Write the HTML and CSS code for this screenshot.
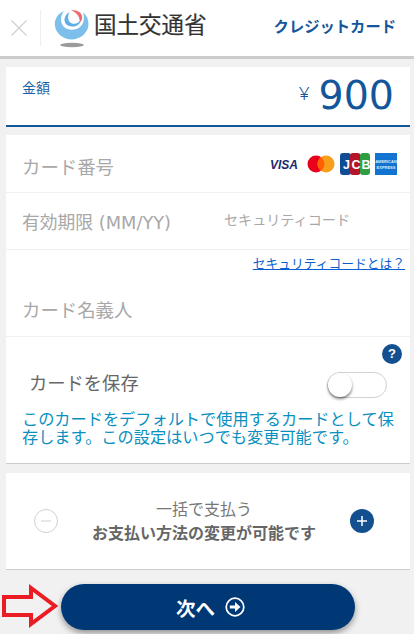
FILE: index.html
```html
<!DOCTYPE html>
<html lang="ja">
<head>
<meta charset="utf-8">
<title>クレジットカード</title>
<link rel="stylesheet" href="styles.css">
</head>
<body>
<header class="top">
  <div class="close">
    <svg width="16" height="16" viewBox="0 0 16 16"><path d="M0.5 0.5L15.5 15.5M15.5 0.5L0.5 15.5" stroke="#cfcfcf" stroke-width="1.2" fill="none"/></svg>
  </div>
  <div class="brand">
    <svg class="mark" width="36" height="38" viewBox="0 0 36 38">
      <path d="M10 1C3 4 0 10 1 16C2 24 10 29.500 17.500 29.500C26 29.500 34.500 23 34.500 14C34.500 9 32.500 5 29 2.500C31 9 29.500 14 26 17C22 20.500 14 20.500 10 17C6 13 6 6 10 1Z" fill="#7cbfea"/>
      <path d="M15.500 2C10.500 5 9.500 10 11.500 13.500C14 17.500 22 17.500 25 14C26.500 12 27 11 27 9.500C25 13 21 14.500 18 13.500C14 12 13 7 15.500 2Z" fill="#5fb0e4"/>
      <path d="M17 0.500C23 -1 29.500 3 28 9C27.500 11 26.500 12 25.500 12.500C26.500 8 23.500 2.500 17 0.500Z" fill="#ec6a72"/>
      <ellipse cx="18" cy="35" rx="12" ry="2.200" fill="#9a9a9a"/>
    </svg>
    <span class="ministry">国土交通省</span>
  </div>
  <div class="title">クレジットカード</div>
</header>

<main class="page">
  <section class="amount">
    <div class="amount-label">金額</div>
    <div class="amount-value"><span class="yen">¥</span><span class="num">900</span></div>
  </section>

  <section class="form">
    <div class="row row-number">
      <span class="ph">カード番号</span>
      <div class="brands">
        <svg class="b-visa" width="30" height="12" viewBox="0 0 30 12"><text x="0" y="11" class="visa">VISA</text></svg>
        <svg class="b-mc" width="28" height="18" viewBox="0 0 28 18"><circle cx="9" cy="9" r="8.500" fill="#eb001b"/><circle cx="19" cy="9" r="8.500" fill="#f79e1b"/><path d="M14 2.200a8.500 8.500 0 0 1 0 13.600a8.500 8.500 0 0 1 0-13.600Z" fill="#ff5f00"/></svg>
        <svg width="30" height="22" viewBox="0 0 30 22">
          <rect x="0" width="11" height="22" rx="3" fill="#0e4c96"/><rect x="10" width="10.500" height="22" rx="3" fill="#b5152b"/><rect x="20" width="10" height="22" rx="3" fill="#2f9e3f"/>
          <text x="3" y="16" class="jcb">J</text><text x="11.500" y="16" class="jcb">C</text><text x="21.500" y="16" class="jcb">B</text>
        </svg>
        <svg width="22" height="22" viewBox="0 0 22 22"><rect width="22" height="22" fill="#1273d0"/><text x="11" y="10" class="amex">AMERICAN</text><text x="11" y="15.500" class="amex">EXPRESS</text></svg>
      </div>
    </div>
    <div class="row row-exp">
      <span class="ph exp">有効期限 (MM/YY)</span>
      <span class="ph cvc">セキュリティコード</span>
    </div>
    <div class="row-link"><a class="cvc-link" href="#">セキュリティコードとは？</a></div>
    <div class="row row-name">
      <span class="ph">カード名義人</span>
    </div>
    <div class="save">
      <div class="help-row"><span class="help">?</span></div>
      <div class="save-row">
        <span class="save-label">カードを保存</span>
        <span class="toggle"><span class="knob"></span></span>
      </div>
      <p class="note">このカードをデフォルトで使用するカードとして保存します。この設定はいつでも変更可能です。</p>
    </div>
  </section>

  <section class="install">
    <span class="step minus">
      <svg width="12" height="12" viewBox="0 0 12 12"><path d="M1 6H11" stroke="#d0d0d0" stroke-width="1"/></svg>
    </span>
    <div class="install-text">
      <div class="install-main">一括で支払う</div>
      <div class="install-sub">お支払い方法の変更が可能です</div>
    </div>
    <span class="step plus">
      <svg width="12" height="12" viewBox="0 0 12 12"><path d="M1 6H11M6 1V11" stroke="#fff" stroke-width="1.500"/></svg>
    </span>
  </section>

  <div class="action">
    <svg class="arrow" width="60" height="48" viewBox="0 0 60 48"><path d="M4 13H31V4L55 22L31 40V31H4Z" fill="none" stroke="#ec1c24" stroke-width="4"/></svg>
    <button class="next" type="button">次へ
      <svg width="20" height="20" viewBox="0 0 20 20"><circle cx="10" cy="10" r="8.800" fill="none" stroke="#fff" stroke-width="1.700"/><path d="M4.800 8.500H10V5L15.500 10L10 15V11.500H4.800Z" fill="#fff"/></svg>
    </button>
  </div>
</main>
</body>
</html>
```

FILE: styles.css
```css
* { box-sizing: border-box; }
html, body { margin: 0; padding: 0; }
body {
  width: 414px;
  height: 634px;
  overflow: hidden;
  background: #f1f1f1;
  font-family: "Noto Sans CJK JP", "Noto Sans", sans-serif;
  color: #666;
}
.top {
  height: 59px;
  background: #fff;
  border-bottom: 3px solid #cccccc;
  display: flex;
  align-items: center;
}
.close {
  width: 41px;
  height: 36px;
  padding-left: 11px;
  border-right: 1px solid #eee;
  display: flex;
  align-items: center;
}
.brand {
  display: flex;
  align-items: flex-start;
  margin-left: 13px;
  gap: 4px;
}
.mark { margin-top: 2px; }
.ministry {
  font-size: 22.500px;
  font-weight: 400;
  color: #333;
  line-height: 1;
  margin-top: 4px;
  -webkit-text-stroke: 0.200px #333;
}
.title {
  margin-left: auto;
  margin-right: 18px;
  margin-bottom: 7px;
  font-size: 15.300px;
  font-weight: 700;
  color: #14569b;
}
.page { padding: 8px 4px 0 6px; }
.amount {
  height: 60px;
  background: #fff;
  border-bottom: 2px solid #14569b;
  display: flex;
  justify-content: space-between;
  padding: 8px 16px 0 16px;
  color: #14569b;
}
.amount-label { font-size: 14px; line-height: 24px; color: #1a5fa5; }
.amount-value { display: flex; align-items: center; height: 40px; }
.yen { font-size: 19px; margin-right: 9px; margin-top: -4px; font-family: "Noto Sans", sans-serif; font-weight: 300; }
.num { font-size: 39.500px; line-height: 40px; font-family: "DejaVu Sans", sans-serif; color: #14569b; }
.form {
  margin-top: 8px;
  height: 329px;
  background: #fff;
  border-bottom: 1px solid #ccc;
  display: flex;
  flex-direction: column;
}
.row { display: flex; align-items: center; padding-left: 16px; }
.ph { color: #a8a8a8; font-size: 18.400px; }
.row-number {
  height: 58px;
  justify-content: space-between;
  padding-right: 13px;
  border-bottom: 1px solid #f1f1f1;
}
.row-number .ph { margin-top: 5px; }
.brands { display: flex; align-items: center; gap: 5px; }
.b-visa { margin-right: 2px; overflow: visible; }
.visa { font: italic 700 12px "Liberation Sans", sans-serif; fill: #1a2a6c; }
.jcb { font: 700 12.500px "Liberation Sans", sans-serif; fill: #fff; }
.amex { font: 700 4px "Liberation Sans", sans-serif; fill: #dcebfa; text-anchor: middle; }
.row-exp { height: 57px; border-bottom: 1px solid #f1f1f1; }
.exp { font-family: "DejaVu Sans", "Noto Sans CJK JP", sans-serif; font-size: 17.800px; width: 202px; }
.cvc { font-size: 14.100px; margin-top: -4px; }
.row-link { height: 30px; display: flex; justify-content: flex-end; padding-right: 5px; }
.cvc-link { font-size: 12.750px; line-height: 26px; height: 24px; color: #0a5fd0; text-decoration: underline; }
.row-name { height: 57px; border-bottom: 1px solid #f1f1f1; }
.row-name .ph { margin-top: 2px; }
.save { padding: 7px 8px 0 16px; flex: 1; }
.help-row { display: flex; justify-content: flex-end; height: 27px; }
.help {
  width: 20px;
  height: 20px;
  border-radius: 50%;
  background: #14508f;
  color: #fff;
  font: 700 13px/20px "Liberation Sans", sans-serif;
  text-align: center;
}
.save-row {
  display: flex;
  justify-content: space-between;
  align-items: center;
  height: 28px;
  padding: 0 15px 0 7px;
}
.save-label { font-size: 18.300px; color: #666; margin-top: -7px; }
.toggle {
  width: 60px;
  height: 26px;
  border: 1px solid #d2d2d2;
  border-radius: 13px;
  position: relative;
  background: #fff;
}
.knob {
  position: absolute;
  left: 0;
  top: 0;
  width: 24px;
  height: 24px;
  border-radius: 50%;
  background: #fff;
  box-shadow: 0 2px 3px rgba(0, 0, 0, 0.500);
}
.note {
  margin: 10px 0 0 0;
  font-size: 16.200px;
  line-height: 18px;
  color: #0a8fc0;
}
.install {
  margin-top: 9px;
  height: 97px;
  background: #fff;
  border-bottom: 1px solid #ccc;
  display: flex;
  align-items: center;
  justify-content: space-between;
  padding: 0 36px 0 28px;
}
.step {
  width: 24px;
  height: 24px;
  border-radius: 50%;
  display: flex;
  align-items: center;
  justify-content: center;
}
.minus { border: 1px solid #d0d0d0; }
.plus { background: #14508f; }
.install-text { text-align: center; margin-bottom: 3px; }
.install-main { font-size: 16px; line-height: 24px; color: #777; }
.install-sub { font-size: 16px; line-height: 24px; font-weight: 700; color: #666; }
.action { position: relative; height: 64px; }
.arrow { position: absolute; left: -6px; top: 14px; }
.next {
  position: absolute;
  left: 55px;
  top: 14px;
  width: 294px;
  height: 46px;
  border: 0;
  border-radius: 23px;
  padding-left: 11px;
  background: #003876;
  color: #fff;
  font: 700 19.500px "Noto Sans CJK JP", sans-serif;
  box-shadow: 0 3px 6px rgba(0, 0, 0, 0.400);
  display: flex;
  align-items: center;
  justify-content: center;
  gap: 10px;
}
```
